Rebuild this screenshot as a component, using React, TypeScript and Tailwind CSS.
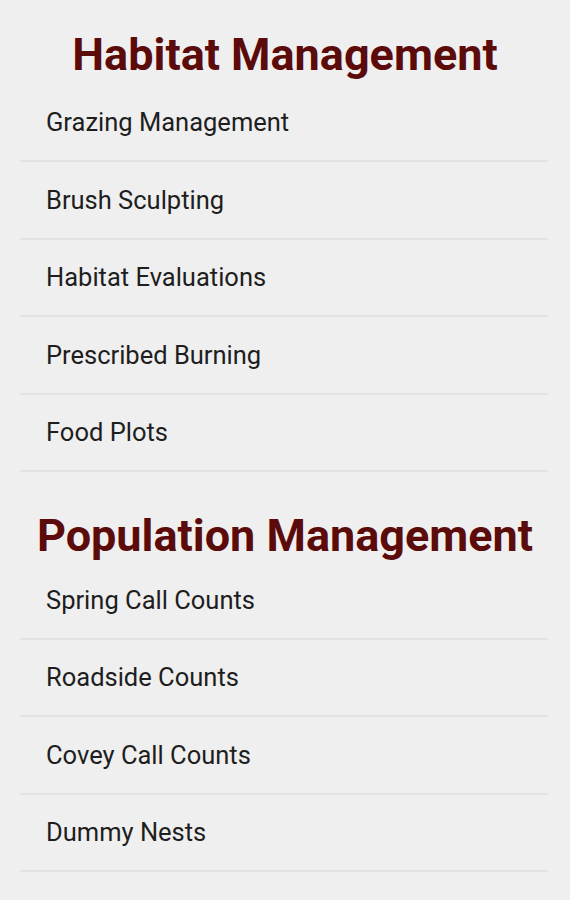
import React from 'react';

const sections = [
  {
    title: 'Habitat Management',
    items: ['Grazing Management', 'Brush Sculpting', 'Habitat Evaluations', 'Prescribed Burning', 'Food Plots'],
  },
  {
    title: 'Population Management',
    items: ['Spring Call Counts', 'Roadside Counts', 'Covey Call Counts', 'Dummy Nests'],
  },
];

const App: React.FC = () => {
  return (
    <div className="w-[570px] h-[900px] bg-[#efefef] overflow-hidden font-['Roboto',sans-serif]">
      {sections.map((section, i) => (
        <div key={section.title}>
          <h2
            className={`text-center font-bold text-[45px] leading-[45px] text-[#5c0b0b] ${
              i === 0 ? 'pt-[32px] pb-[7.5px]' : 'pt-[40.5px] pb-[4.5px]'
            }`}
          >
            {section.title}
          </h2>
          <ul className="ml-[20px] mr-[22px]">
            {section.items.map(item => (
              <li
                key={item}
                className="h-[77.5px] flex items-center pl-[26px] border-b-2 border-[#e2e2e2] text-[25.5px] text-[#1e1e1e]"
              >
                {item}
              </li>
            ))}
          </ul>
        </div>
      ))}
    </div>
  );
};

export default App;
